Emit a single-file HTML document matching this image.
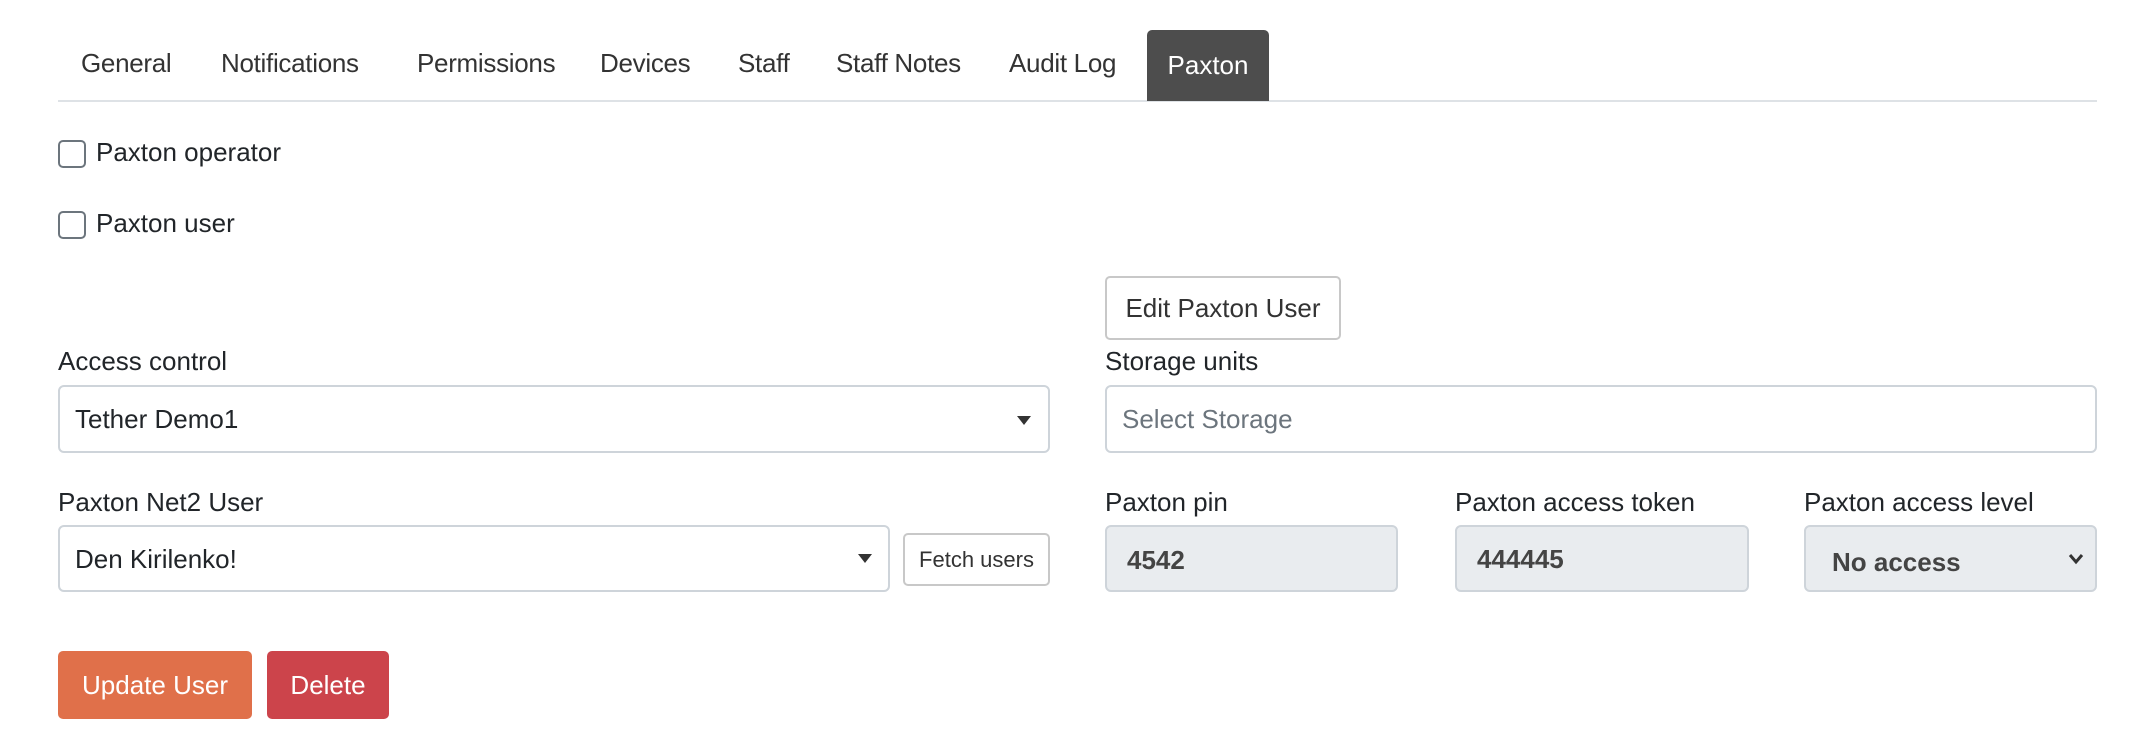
<!DOCTYPE html>
<html><head><meta charset="utf-8"><style>
*{box-sizing:border-box;margin:0;padding:0}
body{width:2156px;height:740px;background:#fff;font-family:"Liberation Sans",sans-serif;color:#212529;position:relative;overflow:hidden;font-size:26px}
.a{position:absolute;white-space:nowrap}
.tab{position:absolute;top:48px;font-size:26px;color:#333;letter-spacing:-0.3px}
.line{position:absolute;left:58px;top:100px;width:2039px;height:2px;background:#dee2e6}
.act{position:absolute;left:1147px;top:30px;width:122px;height:71px;background:#4d4d4d;border-radius:5px 5px 0 0;color:#fff;font-size:26px;text-align:center;line-height:71px}
.cb{position:absolute;left:58px;width:28px;height:28px;border:2px solid #6c757d;border-radius:5px;background:#fff}
.box{position:absolute;border:2px solid #ced4da;border-radius:6px;background:#fff}
.btn{position:absolute;border:2px solid #c8c8c8;border-radius:5px;background:#fff;text-align:center;color:#333}
.arrow{position:absolute;width:0;height:0;border-left:7px solid transparent;border-right:7px solid transparent;border-top:9px solid #333}
.dis{background:#e9ecef;font-weight:bold;color:#444}
</style></head><body>
<div class="tab" style="left:81px">General</div>
<div class="tab" style="left:221px">Notifications</div>
<div class="tab" style="left:417px">Permissions</div>
<div class="tab" style="left:600px">Devices</div>
<div class="tab" style="left:738px">Staff</div>
<div class="tab" style="left:836px">Staff Notes</div>
<div class="tab" style="left:1009px">Audit Log</div>
<div class="line"></div>
<div class="act">Paxton</div>

<div class="cb" style="top:140px"></div>
<div class="a" style="left:96px;top:137px">Paxton operator</div>
<div class="cb" style="top:211px"></div>
<div class="a" style="left:96px;top:208px">Paxton user</div>

<div class="btn" style="left:1105px;top:276px;width:236px;height:64px;line-height:60px">Edit Paxton User</div>

<div class="a" style="left:58px;top:346px">Access control</div>
<div class="box" style="left:58px;top:385px;width:992px;height:68px"><span class="a" style="left:15px;top:17px">Tether Demo1</span></div>
<div class="arrow" style="left:1017px;top:416px"></div>

<div class="a" style="left:1105px;top:346px">Storage units</div>
<div class="box" style="left:1105px;top:385px;width:992px;height:68px"><span class="a" style="left:15px;top:17px;color:#6c757d">Select Storage</span></div>

<div class="a" style="left:58px;top:487px">Paxton Net2 User</div>
<div class="box" style="left:58px;top:525px;width:832px;height:67px"><span class="a" style="left:15px;top:17px">Den Kirilenko!</span></div>
<div class="arrow" style="left:858px;top:554px"></div>
<div class="btn" style="left:903px;top:533px;width:147px;height:53px;line-height:49px;font-size:22px">Fetch users</div>

<div class="a" style="left:1105px;top:487px">Paxton pin</div>
<div class="box dis" style="left:1105px;top:525px;width:293px;height:67px"><span class="a" style="left:20px;top:18px">4542</span></div>
<div class="a" style="left:1455px;top:487px">Paxton access token</div>
<div class="box dis" style="left:1455px;top:525px;width:294px;height:67px"><span class="a" style="left:20px;top:17px">444445</span></div>
<div class="a" style="left:1804px;top:487px">Paxton access level</div>
<div class="box dis" style="left:1804px;top:525px;width:293px;height:67px"><span class="a" style="left:26px;top:20px">No access</span>
<svg class="a" style="left:262px;top:26px" width="16" height="12" viewBox="0 0 16 12"><path d="M2 2 L8 9 L14 2" stroke="#333" stroke-width="3" fill="none"/></svg></div>

<div class="a" style="left:58px;top:651px;width:194px;height:68px;background:#e0704a;border-radius:5px;color:#fff;text-align:center;line-height:68px;font-size:26px">Update User</div>
<div class="a" style="left:267px;top:651px;width:122px;height:68px;background:#cc444b;border-radius:5px;color:#fff;text-align:center;line-height:68px;font-size:26px">Delete</div>
</body></html>
